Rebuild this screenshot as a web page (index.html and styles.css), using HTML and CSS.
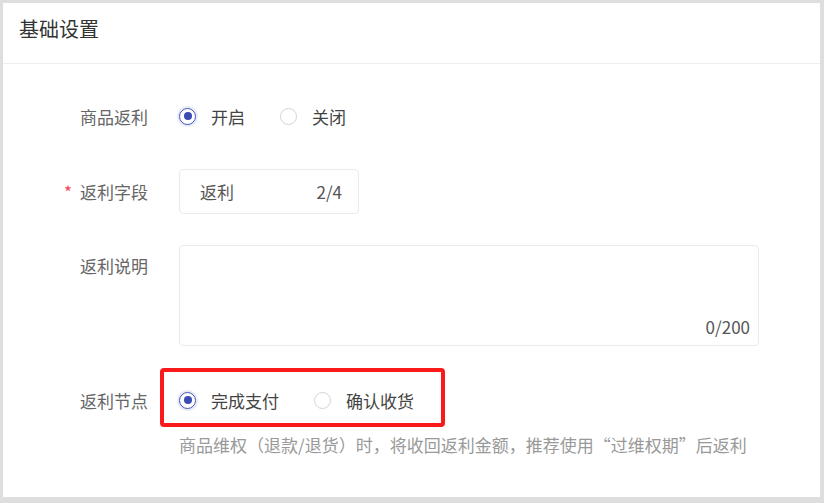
FILE: index.html
```html
<!DOCTYPE html>
<html lang="zh-CN">
<head>
  <meta charset="UTF-8" />
  <title>基础设置</title>
  <link rel="stylesheet" href="styles.css">
</head>
<body>
  <div class="card">
    <div class="card-head">基础设置</div>
    <div class="form">
      <div class="row row-center row-1">
        <label class="label">商品返利</label>
        <div class="radios">
          <span class="radio checked"><i></i>开启</span>
          <span class="radio"><i></i>关闭</span>
        </div>
      </div>

      <div class="row row-center row-2">
        <label class="label required">返利字段</label>
        <div class="input">
          <span class="value">返利</span>
          <span class="count">2/4</span>
        </div>
      </div>

      <div class="row row-3">
        <label class="label label-top">返利说明</label>
        <div class="textarea">
          <span class="count">0/200</span>
        </div>
      </div>

      <div class="row row-center row-4">
        <label class="label">返利节点</label>
        <div class="radios marked">
          <span class="radio checked"><i></i>完成支付</span>
          <span class="radio"><i></i>确认收货</span>
        </div>
      </div>
      <div class="hint">商品维权（退款/退货）时，将收回返利金额，推荐使用“过维权期”后返利</div>
    </div>
  </div>
</body>
</html>
```

FILE: styles.css
```css
body {
  margin: 0;
  background: #dedede;
  font-family: "Noto Sans CJK SC", "Noto Sans", sans-serif;
}
.card {
  margin: 3px 4px 0 3px;
  width: 817px;
  height: 494px;
  background: #fff;
}
.card-head {
  height: 60px;
  line-height: 52px;
  padding-left: 16px;
  font-size: 20px;
  color: #333;
  border-bottom: 1px solid #eee;
}
.form {
  padding-top: 36px;
}
.row {
  display: flex;
}
.row-1 { margin-bottom: 37px; }
.row-2 { margin-bottom: 31px; }
.row-3 { margin-bottom: 38px; }
.row-4 { margin-bottom: 17px; }
.row-center {
  align-items: center;
}
.label {
  width: 145px;
  margin-right: 31px;
  text-align: right;
  font-size: 17px;
  color: #666;
}
.label-top {
  padding-top: 8px;
}
.required::before {
  content: "*";
  color: #f5475a;
  margin-right: 8px;
}
.radios {
  display: flex;
  align-items: center;
  height: 32px;
  gap: 35px;
  position: relative;
}
.radio {
  display: flex;
  align-items: center;
  font-size: 17px;
  color: #444;
}
.radio i {
  width: 15px;
  height: 15px;
  border: 1px solid #d4d4d4;
  border-radius: 50%;
  margin-right: 15px;
  position: relative;
}
.radio.checked i {
  border-color: #3f51b5;
  box-shadow: 0 0 0 2px #e8eaf6;
}
.radio.checked i::after {
  content: "";
  position: absolute;
  left: 3.5px;
  top: 3.5px;
  width: 8px;
  height: 8px;
  border-radius: 50%;
  background: #3a4bb3;
}
.marked::before {
  content: "";
  position: absolute;
  left: -19px;
  top: -16px;
  width: 277px;
  height: 51px;
  border: 4px solid #fa1a1a;
  border-radius: 4px;
}
.input {
  display: flex;
  justify-content: space-between;
  align-items: center;
  width: 180px;
  height: 45px;
  border: 1px solid #eaeaea;
  border-radius: 4px;
  padding: 0 16px 0 20px;
  box-sizing: border-box;
  font-size: 17px;
  color: #555;
}
.textarea {
  position: relative;
  width: 580px;
  height: 101px;
  border: 1px solid #eaeaea;
  border-radius: 4px;
  box-sizing: border-box;
}
.textarea .count {
  position: absolute;
  right: 8px;
  bottom: 6px;
  font-size: 17px;
  color: #555;
}
.hint {
  margin-left: 176px;
  line-height: 24px;
  font-size: 17px;
  color: #999;
}
```
